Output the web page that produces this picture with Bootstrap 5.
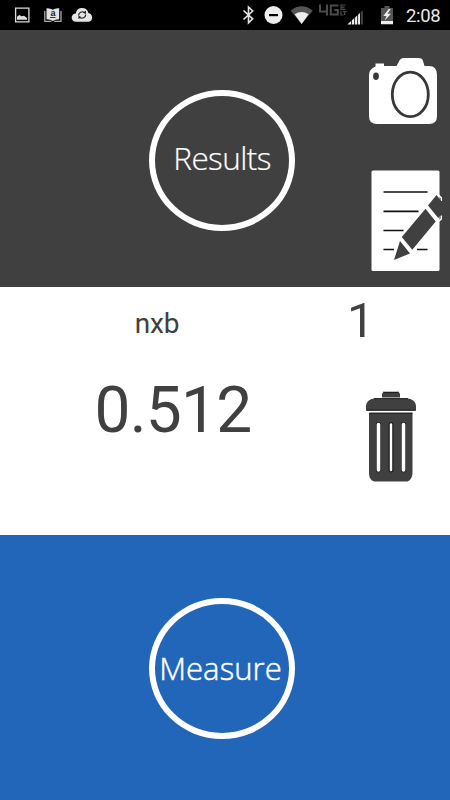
<!DOCTYPE html>
<html lang="en">
<head>
<meta charset="utf-8">
<meta name="viewport" content="width=device-width, initial-scale=1">
<title>Results</title>
<link href="https://cdn.jsdelivr.net/npm/bootstrap@5.3.0/dist/css/bootstrap.min.css" rel="stylesheet">
<style>
body{font-family:Roboto,sans-serif;color:#404040;height:800px}
svg{display:block;flex:none}
.status{height:30px;background:#000;color:#e8e8e8}
.status-left{width:239px;padding-left:10px}
.clock{font-size:18.5px;line-height:30px;padding-top:1px;letter-spacing:-.3px}
.panel-results{height:257px;background:#404040}
.panel-data{height:248px;background:#fff}
.panel-measure{height:265px;background:#2166b8}
.ring{width:146px;height:141px;border:6px solid #fff;border-radius:50%;margin-left:149px;color:#fff;background:transparent;font-family:"Open Sans",sans-serif;font-weight:300;line-height:42px;white-space:nowrap}
.ring-results{margin-top:60px;-webkit-text-stroke:.2px #fff}
.ring-measure{margin-top:63px;-webkit-text-stroke:.5px #fff}
.ring-results span{letter-spacing:-.6px;font-size:31.5px;padding-bottom:6px}
.ring-measure span{letter-spacing:.1px;font-size:31px;padding-right:3px;padding-bottom:1px}
.tools{width:95px;padding-top:15px;gap:25px}
.readings{width:314px}
.sample{font-size:28px;line-height:32px;padding-top:21px;letter-spacing:-.2px}
.value{font-size:64px;line-height:76px;margin-top:33px;padding-left:32px;letter-spacing:-.8px}
.side{width:136px}
.count{font-size:49px;line-height:58px;padding-top:5px;padding-left:33px}
.bin{margin-top:30px}
</style>
</head>
<body class="bg-white overflow-hidden d-flex flex-column">
<header class="status d-flex">
  <div class="status-left d-flex">
    <svg width="90" height="30" viewBox="10 0 90 30">
      <path fill="none" stroke="#ddd" stroke-width="1.300" d="M15.600 8.100h13.300v13.700H15.600z"/><path fill="#ddd" d="M17 19.800v-3l2.500-1.800 2 1.300 2.500-.5 3 2.200v1.800z"/>
      <path fill="#e2e2e2" d="M46.500 8.300q4-.2 6.300 1.500Q55 8 59.200 8.300v10.900q-4 0-6.300 1.800-2.400-1.800-6.400-1.800z"/><path fill="none" stroke="#aaa" stroke-width="1.300" d="M44.800 11v10.300h6.700M61 11v10.300h-6.700"/>
      <text x="50.400" y="15.500" font-family="Liberation Sans,sans-serif" font-weight="bold" font-size="9" fill="#222">a</text><path stroke="#333" d="M50 17.500h5.500"/>
      <path fill="#e5e5e5" d="M76 21.800a4.200 4.200 0 0 1-.3-8.400Q77 8 82 8q5.200 0 6.400 5a4.500 4.500 0 0 1 .3 8.800z"/>
      <path fill="none" stroke="#222" stroke-width="1.200" d="M78.600 15.500a3.700 3.700 0 0 1 6-2.900M85.700 14.500a3.700 3.700 0 0 1-6 2.900"/><path fill="#222" d="m86 10.800-.2 3.400-3-1.600zM78.300 19l.3-3.400 2.900 1.700z"/>
    </svg>
  </div>
  <svg width="77" height="30" viewBox="239 0 77 30">
    <path fill="none" stroke="#e5e5e5" stroke-width="1.600" d="m243.500 10.500 9.200 8.300-4.200 4V7l4.200 4-9.200 8.500"/>
    <circle cx="273.500" cy="15" r="9" fill="#eee"/><path fill="#000" d="M269 14h9v2.200h-9z"/>
    <path fill="#555" d="M290.600 10.600Q301.500 2 312.800 10.600L301.600 24z"/><path fill="#eee" d="M294.600 14.300q7-4.500 14 0l-7 9.700z"/>
  </svg>
  <svg width="86" height="30" viewBox="316 0 86 30">
    <path fill="none" stroke="#4b4b4b" stroke-width="2" d="M320 4.500v7h8M327 4.500v11M338.500 5.500h-7.700v9h7v-4.500h-3.500"/>
    <g fill="none" stroke="#4b4b4b" stroke-width="1.200"><path d="M345.500 5H341v4.300h4.500M341 7.100h3.500M341 11v4h2.500M343 11.500h3.500M344.600 11.500V15"/></g>
    <path fill="#eee" d="M347.300 24.500 360 13v11.500z"/><path fill="#444" d="m360.800 12.300 2-2v14.200h-2z"/><path stroke="#000" stroke-width=".8" d="M351.500 18v7M354.600 16v9M357.600 13v12"/>
    <path fill="#555" d="M381 8h3.500V6h5v2h3.500v13h-12z"/><path fill="#eee" d="M381 21h12v3.300h-12zM388.700 9l-5.400 7h3.200l-1.800 4.600 6.300-6.800h-3.500l3.200-4.800z"/>
  </svg>
  <div class="clock ps-1">2:08</div>
</header>
<section class="panel-results d-flex justify-content-between">
  <button type="button" class="ring ring-results p-0 d-flex align-items-center justify-content-center"><span>Results</span></button>
  <div class="tools d-flex flex-column">
    <svg width="95" height="90" viewBox="0 0 95 90" role="img" aria-label="Camera">
      <path fill="#fff" d="M14 71V30q0-6 6.500-8.500v-3h8.500V21h12.500l2.500-4.500q1-3.500 5-3.500h14.500q4 0 4.500 3l1.500 5h4.500q8 0 8 9V71q0 8-8 8H22q-8 0-8-8z"/>
      <ellipse cx="55.300" cy="49.400" rx="18" ry="22.300" fill="#fff" stroke="#383838" stroke-width="2.800"/><ellipse cx="21" cy="31.300" rx="2.900" ry="3.700" fill="#383838"/>
    </svg>
    <svg width="95" height="127" viewBox="0 0 95 127" role="img" aria-label="Edit note">
      <rect x="16.500" y="10.500" width="68" height="100.500" rx="1.500" fill="#fff"/>
      <path stroke="#111" stroke-width="1.700" d="M28.500 32h44M28.500 51.300h35M28.500 70.500h20M28.500 89.500h10.500M62 89.500h10.500"/>
      <path fill="none" stroke="#fff" stroke-width="1.500" d="m83 34.500 3.300 3.200V41M86.300 55.500V59L83 62"/>
      <path fill="#404040" d="m81.500 35 10.300 13-8.500 10-10.300-12.500zM70.500 48.800l10.200 12.800-23.400 28.200-10.500-12.800zM45 81l10 12.500-16 6.500z"/>
    </svg>
  </div>
</section>
<section class="panel-data d-flex">
  <div class="readings d-flex flex-column text-center">
    <div class="sample">nxb</div>
    <div class="value">0.512</div>
  </div>
  <div class="side d-flex flex-column">
    <div class="count">1</div>
    <svg class="bin ms-auto" width="100" height="110" viewBox="0 0 100 110" role="img" aria-label="Delete">
      <path fill="#404040" d="M32 17.500v-3q0-2.500 3-2.500h12q3 0 3 2.500v3zM16 30.500v-5q1-6 8-7h34q7 1 8 7v5zM19 33h43.500v61q-1 6-5 7.500h-33q-5-1-5.500-7.500z"/>
      <path stroke="#000" stroke-width=".8" d="M33 12.200h16M24 18.600h34M16.500 30.300h49M19.500 33h43"/>
      <path fill="none" stroke="#222" stroke-width="5" stroke-linecap="round" d="M28.500 44.500v45.500M53.500 44.500v45.500M41 44.500v45.500"/>
      <path fill="none" stroke="#fff" stroke-width="3.600" stroke-linecap="round" d="M28.500 44.500v45.500M53.500 44.500v45.500"/><path fill="none" stroke="#fff" stroke-width="2.400" stroke-linecap="round" d="M41 44.500v45.500"/>
    </svg>
  </div>
</section>
<section class="panel-measure d-flex">
  <button type="button" class="ring ring-measure p-0 d-flex align-items-center justify-content-center"><span>Measure</span></button>
</section>
<script src="https://cdn.jsdelivr.net/npm/bootstrap@5.3.0/dist/js/bootstrap.bundle.min.js"></script>
</body>
</html>
